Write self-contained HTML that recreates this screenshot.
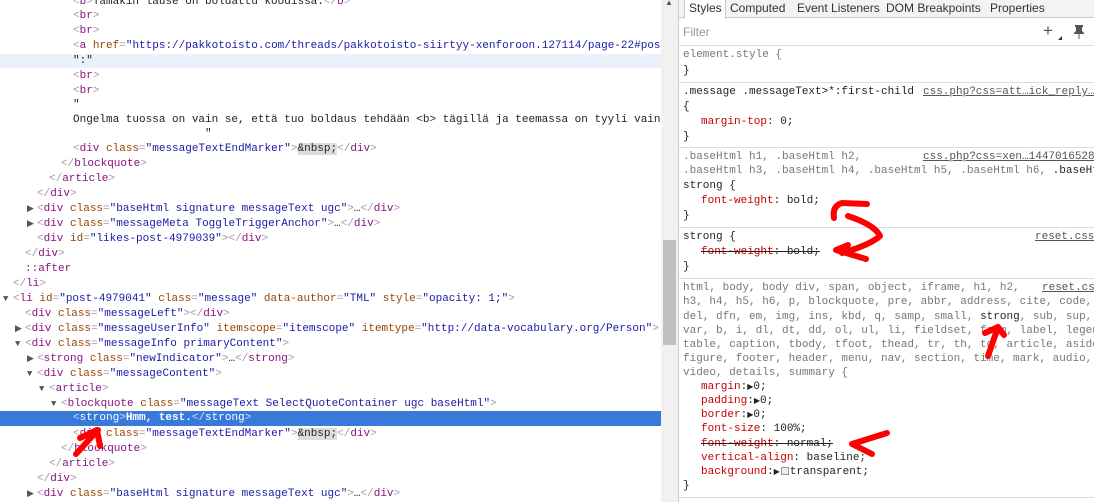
<!DOCTYPE html>
<html><head><meta charset="utf-8"><style>
*{margin:0;padding:0;box-sizing:border-box}
body{width:1094px;height:502px;overflow:hidden;background:#fff;position:relative;font-family:"Liberation Mono",monospace;font-size:11px;color:#222}
.l{position:absolute;white-space:pre;line-height:15px;height:15px}
.t{color:#881280}.b{color:#a894a6}.a{color:#994500}.v{color:#1a1aa6}.g{color:#888}
.ar{position:absolute;font-size:9px;color:#555;line-height:15px}
.r{position:absolute;white-space:pre;line-height:14px;height:14px}
.p{color:#c80000}.s{color:#777}
.lk{position:absolute;white-space:pre;line-height:14px;color:#555;text-decoration:underline;background:#fff;padding-left:2px}
.hr{position:absolute;left:679px;width:415px;height:1px;background:#ddd}
.st{text-decoration:line-through}
.tab{position:absolute;top:0;font-family:"Liberation Sans",sans-serif;font-size:12px;color:#333;line-height:16px}
</style></head><body>
<div style="position:absolute;left:0;top:54px;width:661px;height:14px;background:#eaf1fb"></div>
<div style="position:absolute;left:0;top:411px;width:661px;height:15px;background:#3879d9"></div>

<div class="l" style="top:-5px;left:73px"><span class="b">&lt;</span><span class="t">b</span><span class="b">&gt;</span>Tämäkin lause on boldattu koodissa.<span class="b">&lt;/</span><span class="t">b</span><span class="b">&gt;</span></div>
<div class="l" style="top:9px;left:73px"><span class="b">&lt;</span><span class="t">br</span><span class="b">&gt;</span></div>
<div class="l" style="top:24px;left:73px"><span class="b">&lt;</span><span class="t">br</span><span class="b">&gt;</span></div>
<div class="l" style="top:39px;left:73px"><span class="b">&lt;</span><span class="t">a</span> <span class="a">href</span><span class="b">=</span><span class="v">"https://pakkotoisto.com/threads/pakkotoisto-siirtyy-xenforoon.127114/page-22#pos</span></div>
<div class="l" style="top:54px;left:73px">":"</div>
<div class="l" style="top:69px;left:73px"><span class="b">&lt;</span><span class="t">br</span><span class="b">&gt;</span></div>
<div class="l" style="top:84px;left:73px"><span class="b">&lt;</span><span class="t">br</span><span class="b">&gt;</span></div>
<div class="l" style="top:98px;left:73px">"</div>
<div class="l" style="top:113px;left:73px">Ongelma tuossa on vain se, että tuo boldaus tehdään &lt;b&gt; tägillä ja teemassa on tyyli vain</div>
<div class="l" style="top:127px;left:205px">"</div>
<div class="l" style="top:142px;left:73px"><span class="b">&lt;</span><span class="t">div</span> <span class="a">class</span><span class="b">=</span><span class="v">"messageTextEndMarker"</span><span class="b">&gt;</span><span style="background:#ddd">&amp;nbsp;</span><span class="b">&lt;/</span><span class="t">div</span><span class="b">&gt;</span></div>
<div class="l" style="top:157px;left:61px"><span class="b">&lt;/</span><span class="t">blockquote</span><span class="b">&gt;</span></div>
<div class="l" style="top:172px;left:49px"><span class="b">&lt;/</span><span class="t">article</span><span class="b">&gt;</span></div>
<div class="l" style="top:187px;left:37px"><span class="b">&lt;/</span><span class="t">div</span><span class="b">&gt;</span></div>
<div class="ar" style="top:202px;left:27px">▶</div>
<div class="l" style="top:202px;left:37px"><span class="b">&lt;</span><span class="t">div</span> <span class="a">class</span><span class="b">=</span><span class="v">"baseHtml signature messageText ugc"</span><span class="b">&gt;</span>…<span class="b">&lt;/</span><span class="t">div</span><span class="b">&gt;</span></div>
<div class="ar" style="top:217px;left:27px">▶</div>
<div class="l" style="top:217px;left:37px"><span class="b">&lt;</span><span class="t">div</span> <span class="a">class</span><span class="b">=</span><span class="v">"messageMeta ToggleTriggerAnchor"</span><span class="b">&gt;</span>…<span class="b">&lt;/</span><span class="t">div</span><span class="b">&gt;</span></div>
<div class="l" style="top:232px;left:37px"><span class="b">&lt;</span><span class="t">div</span> <span class="a">id</span><span class="b">=</span><span class="v">"likes-post-4979039"</span><span class="b">&gt;&lt;/</span><span class="t">div</span><span class="b">&gt;</span></div>
<div class="l" style="top:247px;left:25px"><span class="b">&lt;/</span><span class="t">div</span><span class="b">&gt;</span></div>
<div class="l" style="top:262px;left:25px"><span class="t">::after</span></div>
<div class="l" style="top:277px;left:13px"><span class="b">&lt;/</span><span class="t">li</span><span class="b">&gt;</span></div>
<div class="ar" style="top:292px;left:3px">▼</div>
<div class="l" style="top:292px;left:13px"><span class="b">&lt;</span><span class="t">li</span> <span class="a">id</span><span class="b">=</span><span class="v">"post-4979041"</span> <span class="a">class</span><span class="b">=</span><span class="v">"message"</span> <span class="a">data-author</span><span class="b">=</span><span class="v">"TML"</span> <span class="a">style</span><span class="b">=</span><span class="v">"opacity: 1;"</span><span class="b">&gt;</span></div>
<div class="l" style="top:307px;left:25px"><span class="b">&lt;</span><span class="t">div</span> <span class="a">class</span><span class="b">=</span><span class="v">"messageLeft"</span><span class="b">&gt;&lt;/</span><span class="t">div</span><span class="b">&gt;</span></div>
<div class="ar" style="top:322px;left:15px">▶</div>
<div class="l" style="top:322px;left:25px"><span class="b">&lt;</span><span class="t">div</span> <span class="a">class</span><span class="b">=</span><span class="v">"messageUserInfo"</span> <span class="a">itemscope</span><span class="b">=</span><span class="v">"itemscope"</span> <span class="a">itemtype</span><span class="b">=</span><span class="v">"http://data-vocabulary.org/Person"</span><span class="b">&gt;</span>.</div>
<div class="ar" style="top:337px;left:15px">▼</div>
<div class="l" style="top:337px;left:25px"><span class="b">&lt;</span><span class="t">div</span> <span class="a">class</span><span class="b">=</span><span class="v">"messageInfo primaryContent"</span><span class="b">&gt;</span></div>
<div class="ar" style="top:352px;left:27px">▶</div>
<div class="l" style="top:352px;left:37px"><span class="b">&lt;</span><span class="t">strong</span> <span class="a">class</span><span class="b">=</span><span class="v">"newIndicator"</span><span class="b">&gt;</span>…<span class="b">&lt;/</span><span class="t">strong</span><span class="b">&gt;</span></div>
<div class="ar" style="top:367px;left:27px">▼</div>
<div class="l" style="top:367px;left:37px"><span class="b">&lt;</span><span class="t">div</span> <span class="a">class</span><span class="b">=</span><span class="v">"messageContent"</span><span class="b">&gt;</span></div>
<div class="ar" style="top:382px;left:39px">▼</div>
<div class="l" style="top:382px;left:49px"><span class="b">&lt;</span><span class="t">article</span><span class="b">&gt;</span></div>
<div class="ar" style="top:397px;left:51px">▼</div>
<div class="l" style="top:397px;left:61px"><span class="b">&lt;</span><span class="t">blockquote</span> <span class="a">class</span><span class="b">=</span><span class="v">"messageText SelectQuoteContainer ugc baseHtml"</span><span class="b">&gt;</span></div>
<div class="l" style="top:411px;left:73px;color:#fff"><span style="color:#cfdcf3">&lt;</span>strong<span style="color:#cfdcf3">&gt;</span><b>Hmm, test.</b><span style="color:#cfdcf3">&lt;/</span>strong<span style="color:#cfdcf3">&gt;</span></div>
<div class="l" style="top:427px;left:73px"><span class="b">&lt;</span><span class="t">div</span> <span class="a">class</span><span class="b">=</span><span class="v">"messageTextEndMarker"</span><span class="b">&gt;</span><span style="background:#ddd">&amp;nbsp;</span><span class="b">&lt;/</span><span class="t">div</span><span class="b">&gt;</span></div>
<div class="l" style="top:442px;left:61px"><span class="b">&lt;/</span><span class="t">blockquote</span><span class="b">&gt;</span></div>
<div class="l" style="top:457px;left:49px"><span class="b">&lt;/</span><span class="t">article</span><span class="b">&gt;</span></div>
<div class="l" style="top:472px;left:37px"><span class="b">&lt;/</span><span class="t">div</span><span class="b">&gt;</span></div>
<div class="ar" style="top:487px;left:27px">▶</div>
<div class="l" style="top:487px;left:37px"><span class="b">&lt;</span><span class="t">div</span> <span class="a">class</span><span class="b">=</span><span class="v">"baseHtml signature messageText ugc"</span><span class="b">&gt;</span>…<span class="b">&lt;/</span><span class="t">div</span><span class="b">&gt;</span></div>

<div style="position:absolute;left:661px;top:0;width:17px;height:502px;background:#f1f1f1"></div>
<div style="position:absolute;left:663px;top:240px;width:13px;height:105px;background:#c1c1c1"></div>
<div style="position:absolute;left:665px;top:0;font-size:8px;color:#555;font-family:'Liberation Sans',sans-serif;line-height:6px">▲</div>
<div style="position:absolute;left:678px;top:0;width:1px;height:502px;background:#ccc"></div>

<div style="position:absolute;left:679px;top:0;width:415px;height:18px;background:#f3f3f3;border-bottom:1px solid #ccc"></div>
<div style="position:absolute;left:684px;top:0;width:42px;height:19px;background:#fff;border-left:1px solid #ccc;border-right:1px solid #ccc"></div>
<div class="tab" style="left:689px">Styles</div>
<div class="tab" style="left:730px">Computed</div>
<div class="tab" style="left:797px">Event Listeners</div>
<div class="tab" style="left:886px">DOM Breakpoints</div>
<div class="tab" style="left:990px">Properties</div>
<div style="position:absolute;left:683px;top:25px;font-family:'Liberation Sans',sans-serif;font-size:12px;color:#999">Filter</div>
<div style="position:absolute;left:1043px;top:21px;font-family:'Liberation Sans',sans-serif;font-size:17px;color:#555">+</div>
<div style="position:absolute;left:1058px;top:36px;width:0;height:0;border-left:4px solid transparent;border-bottom:4px solid #333"></div>
<svg style="position:absolute;left:1072px;top:24px" width="14" height="16" viewBox="0 0 14 16"><path d="M3 1h8v2h-1v4l2 2v1H2V9l2-2V3H3z M6.5 10h1v5h-1z" fill="#555"/></svg>
<div class="hr" style="top:45px"></div>

<div class="r" style="top:48px;left:683px"><span class="s">element.style {</span></div>
<div class="r" style="top:64px;left:683px">}</div>
<div class="hr" style="top:82px"></div>
<div class="r" style="top:85px;left:683px">.message .messageText&gt;*:first-child</div>
<div class="lk" style="top:85px;left:921px">css.php?css=att…ick_reply…</div>
<div class="r" style="top:100px;left:683px">{</div>
<div class="r" style="top:115px;left:701px"><span class="p">margin-top</span>: 0;</div>
<div class="r" style="top:130px;left:683px">}</div>
<div class="hr" style="top:147px"></div>
<div class="r" style="top:150px;left:683px"><span class="s">.baseHtml h1, .baseHtml h2,</span></div>
<div class="lk" style="top:150px;left:921px">css.php?css=xen…1447016528</div>
<div class="r" style="top:164px;left:683px"><span class="s">.baseHtml h3, .baseHtml h4, .baseHtml h5, .baseHtml h6, </span>.baseHt</div>
<div class="r" style="top:179px;left:683px">strong {</div>
<div class="r" style="top:194px;left:701px"><span class="p">font-weight</span>: bold;</div>
<div class="r" style="top:209px;left:683px">}</div>
<div class="hr" style="top:227px"></div>
<div class="r" style="top:230px;left:683px">strong {</div>
<div class="lk" style="top:230px;left:1033px">reset.css</div>
<div class="r st" style="top:245px;left:701px"><span class="p">font-weight</span>: bold;</div>
<div class="r" style="top:260px;left:683px">}</div>
<div class="hr" style="top:278px"></div>
<div class="r s" style="top:281px;left:683px">html, body, body div, span, object, iframe, h1, h2,</div>
<div class="lk" style="top:281px;left:1040px">reset.cs</div>
<div class="r s" style="top:295px;left:683px">h3, h4, h5, h6, p, blockquote, pre, abbr, address, cite, code,</div>
<div class="r s" style="top:310px;left:683px">del, dfn, em, img, ins, kbd, q, samp, small, <span style="color:#222">strong</span>, sub, sup,</div>
<div class="r s" style="top:324px;left:683px">var, b, i, dl, dt, dd, ol, ul, li, fieldset, form, label, legend,</div>
<div class="r s" style="top:338px;left:683px">table, caption, tbody, tfoot, thead, tr, th, td, article, aside,</div>
<div class="r s" style="top:352px;left:683px">figure, footer, header, menu, nav, section, time, mark, audio,</div>
<div class="r s" style="top:366px;left:683px">video, details, summary {</div>
<div class="r" style="top:380px;left:701px"><span class="p">margin</span>:<span style="font-size:8px">▶</span>0;</div>
<div class="r" style="top:394px;left:701px"><span class="p">padding</span>:<span style="font-size:8px">▶</span>0;</div>
<div class="r" style="top:408px;left:701px"><span class="p">border</span>:<span style="font-size:8px">▶</span>0;</div>
<div class="r" style="top:422px;left:701px"><span class="p">font-size</span>: 100%;</div>
<div class="r st" style="top:437px;left:701px"><span class="p">font-weight</span>: normal;</div>
<div class="r" style="top:451px;left:701px"><span class="p">vertical-align</span>: baseline;</div>
<div class="r" style="top:465px;left:701px"><span class="p">background</span>:<span style="font-size:8px">▶</span><span style="display:inline-block;width:8px;height:8px;border:1px solid #999;background:#eee;vertical-align:-1px;margin:0 1px"></span>transparent;</div>
<div class="r" style="top:479px;left:683px">}</div>
<div class="hr" style="top:497px"></div>

<svg style="position:absolute;left:0;top:0" width="1094" height="502">
<g fill="none" stroke="#f00" stroke-width="6" stroke-linecap="round" stroke-linejoin="round">
<path d="M76 454 L98 430"/><path d="M80 438 L97 430 L100 446"/>
<path d="M867 204 L842 203 Q832 206 834 218 M848 216 Q875 225 880 236 Q870 245 842 253 M836 250 L866 259 M836 250 L848 245"/>
<path d="M988 356 L998 327"/><path d="M985 333 L998 327 L1004 335"/>
<path d="M887 433 L852 444 L872 454"/>
</g>
</svg>
</body></html>
